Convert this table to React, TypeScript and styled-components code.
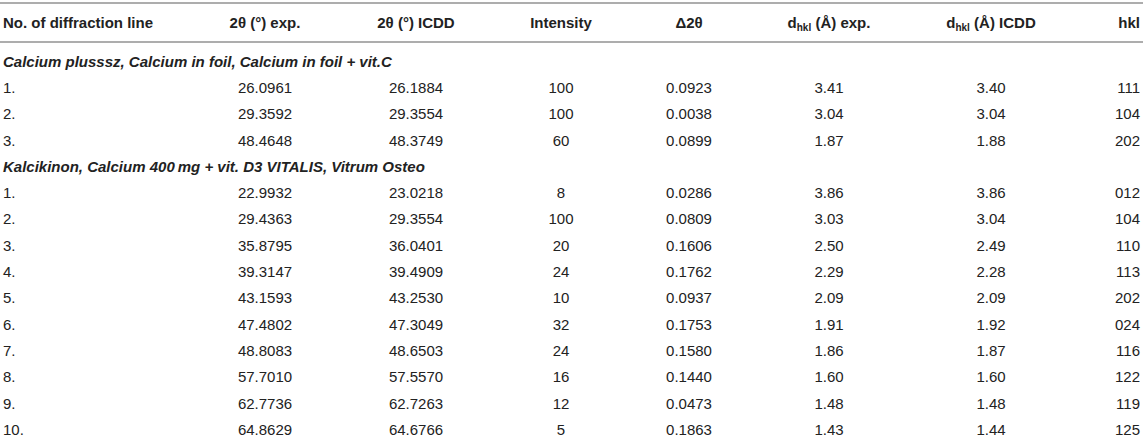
import styled, { createGlobalStyle } from 'styled-components'

const GlobalStyle = createGlobalStyle`
  body {
    margin: 0;
    background: #fff;
  }
`

const Sheet = styled.div`
  width: 1143px;
  padding-top: 2px;
  font-family: 'Liberation Sans', Arial, sans-serif;
  font-size: 15px;
  color: #222;
`

const Grid = styled.div`
  display: grid;
  grid-template-columns: 195px 140px 162px 128px 128px 152px 172px 66px;
  align-items: center;
`

const Rule = styled.hr`
  margin: 0;
  border: 0;
  height: 2px;
  background: #adadad;
`

const HeaderRow = styled(Grid)`
  height: 37px;
  font-weight: 700;
`

const DataRow = styled(Grid)`
  height: 26.3px;
`

const Cell = styled.div<{ $align?: 'left' | 'center' | 'right' }>`
  text-align: ${(p) => p.$align || 'center'};
  padding: 0 3px;
  white-space: nowrap;
`

const GroupTitle = styled.div<{ $first?: boolean }>`
  display: flex;
  align-items: center;
  height: 26.3px;
  margin-top: ${(p) => (p.$first ? '5px' : '0')};
  padding: 0 3px;
  font-weight: 700;
  font-style: italic;
  white-space: nowrap;
`

const Sub = styled.sub`
  font-size: 10px;
  vertical-align: -3px;
  line-height: 0;
`

type Line = [string, string, string, string, string, string, string, string]

const groups: { title: string; rows: Line[] }[] = [
  {
    title: 'Calcium plusssz, Calcium in foil, Calcium in foil + vit.C',
    rows: [
      ['1.', '26.0961', '26.1884', '100', '0.0923', '3.41', '3.40', '111'],
      ['2.', '29.3592', '29.3554', '100', '0.0038', '3.04', '3.04', '104'],
      ['3.', '48.4648', '48.3749', '60', '0.0899', '1.87', '1.88', '202'],
    ],
  },
  {
    title: 'Kalcikinon, Calcium 400\u2009mg + vit. D3 VITALIS, Vitrum Osteo',
    rows: [
      ['1.', '22.9932', '23.0218', '8', '0.0286', '3.86', '3.86', '012'],
      ['2.', '29.4363', '29.3554', '100', '0.0809', '3.03', '3.04', '104'],
      ['3.', '35.8795', '36.0401', '20', '0.1606', '2.50', '2.49', '110'],
      ['4.', '39.3147', '39.4909', '24', '0.1762', '2.29', '2.28', '113'],
      ['5.', '43.1593', '43.2530', '10', '0.0937', '2.09', '2.09', '202'],
      ['6.', '47.4802', '47.3049', '32', '0.1753', '1.91', '1.92', '024'],
      ['7.', '48.8083', '48.6503', '24', '0.1580', '1.86', '1.87', '116'],
      ['8.', '57.7010', '57.5570', '16', '0.1440', '1.60', '1.60', '122'],
      ['9.', '62.7736', '62.7263', '12', '0.0473', '1.48', '1.48', '119'],
      ['10.', '64.8629', '64.6766', '5', '0.1863', '1.43', '1.44', '125'],
    ],
  },
]

const alignOf = (i: number) => (i === 0 ? 'left' : i === 7 ? 'right' : 'center')

export default function App() {
  return (
    <Sheet>
      <GlobalStyle />
      <Rule />
      <HeaderRow>
        <Cell $align="left">No. of diffraction line</Cell>
        <Cell>2θ (°) exp.</Cell>
        <Cell>2θ (°) ICDD</Cell>
        <Cell>Intensity</Cell>
        <Cell>Δ2θ</Cell>
        <Cell>
          d<Sub>hkl</Sub> (Å) exp.
        </Cell>
        <Cell>
          d<Sub>hkl</Sub> (Å) ICDD
        </Cell>
        <Cell $align="right">hkl</Cell>
      </HeaderRow>
      <Rule />
      {groups.map((g, gi) => (
        <section key={g.title}>
          <GroupTitle $first={gi === 0}>{g.title}</GroupTitle>
          {g.rows.map((r) => (
            <DataRow key={r[0]}>
              {r.map((c, i) => (
                <Cell key={i} $align={alignOf(i)}>
                  {c}
                </Cell>
              ))}
            </DataRow>
          ))}
        </section>
      ))}
    </Sheet>
  )
}
